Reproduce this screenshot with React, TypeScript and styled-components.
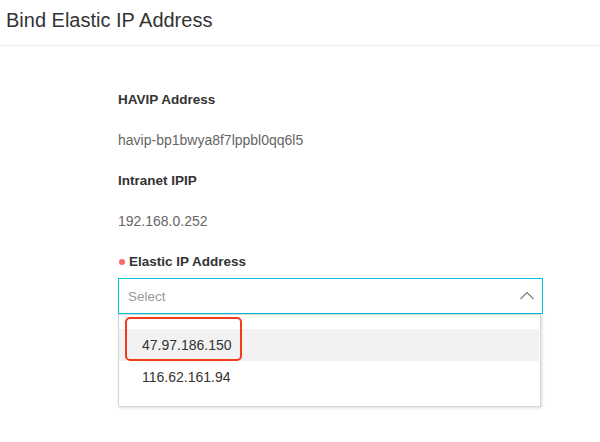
import styled, { createGlobalStyle } from 'styled-components'

const GlobalStyle = createGlobalStyle`
  html, body {
    margin: 0;
    padding: 0;
    background: #fff;
  }
  body {
    font-family: "Liberation Sans", Arial, sans-serif;
    color: #333;
  }
`

const Page = styled.div`
  width: 600px;
  height: 442px;
  overflow: hidden;
  background: #fff;
`

const Header = styled.div`
  height: 46px;
  border-bottom: 1px solid #ececec;
  padding: 9px 0 0 6px;
  box-sizing: border-box;
`

const Title = styled.h1`
  margin: 0;
  font-size: 20px;
  font-weight: normal;
  line-height: 22px;
  color: #333;
`

const Form = styled.div`
  display: flex;
  flex-direction: column;
  gap: 20px;
  padding: 43px 0 0 118px;
  width: 425px;
`

const Field = styled.div`
  display: flex;
  flex-direction: column;
  gap: 21px;
`

const Label = styled.div`
  display: flex;
  align-items: center;
  gap: 4px;
  height: 20px;
  font-size: 13.5px;
  font-weight: bold;
  color: #333;
`

const RequiredDot = styled.span`
  width: 6px;
  height: 6px;
  border-radius: 50%;
  background: #f66a6a;
  margin: 1px 0 0 1px;
`

const Value = styled.div`
  height: 20px;
  line-height: 20px;
  font-size: 14px;
  color: #666;
`

const SelectWrap = styled.div`
  position: relative;
  margin-top: -14px;
`

const SelectBox = styled.div`
  height: 36px;
  box-sizing: border-box;
  border: 1px solid #00c1de;
  display: flex;
  align-items: center;
  justify-content: space-between;
  padding: 0 7px 0 9px;
`

const Placeholder = styled.span`
  font-size: 13.5px;
  color: #999;
`

const Menu = styled.div`
  position: absolute;
  top: 36px;
  left: 0;
  width: 423px;
  box-sizing: border-box;
  border: 1px solid #d6d6d6;
  box-shadow: 1px 1px 3px rgba(0, 0, 0, 0.15);
  background: #fff;
  padding: 14px 1px 13px 0;
`

const Option = styled.div<{ $active?: boolean }>`
  height: 32px;
  line-height: 32px;
  padding-left: 23px;
  font-size: 14px;
  color: #333;
  background: ${(p) => (p.$active ? '#f2f2f2' : 'transparent')};
`

const Highlight = styled.div`
  position: absolute;
  left: 6px;
  top: 2px;
  width: 117px;
  height: 44px;
  box-sizing: border-box;
  border: 2.5px solid #f23c1a;
  border-radius: 5px;
`

const Chevron = () => (
  <svg width="16" height="10" viewBox="0 0 16 10">
    <polyline points="1.5,8 8,1.5 14.5,8" fill="none" stroke="#777" strokeWidth="1.1" />
  </svg>
)

const App = () => {
  return (
    <>
      <GlobalStyle />
      <Page>
        <Header>
          <Title>Bind Elastic IP Address</Title>
        </Header>
        <Form>
          <Field>
            <Label>HAVIP Address</Label>
            <Value>havip-bp1bwya8f7lppbl0qq6l5</Value>
          </Field>
          <Field>
            <Label>Intranet IPIP</Label>
            <Value>192.168.0.252</Value>
          </Field>
          <Field>
            <Label>
              <RequiredDot />
              Elastic IP Address
            </Label>
            <SelectWrap>
              <SelectBox>
                <Placeholder>Select</Placeholder>
                <Chevron />
              </SelectBox>
              <Menu>
                <Option $active>47.97.186.150</Option>
                <Option>116.62.161.94</Option>
                <Highlight />
              </Menu>
            </SelectWrap>
          </Field>
        </Form>
      </Page>
    </>
  )
}

export default App
